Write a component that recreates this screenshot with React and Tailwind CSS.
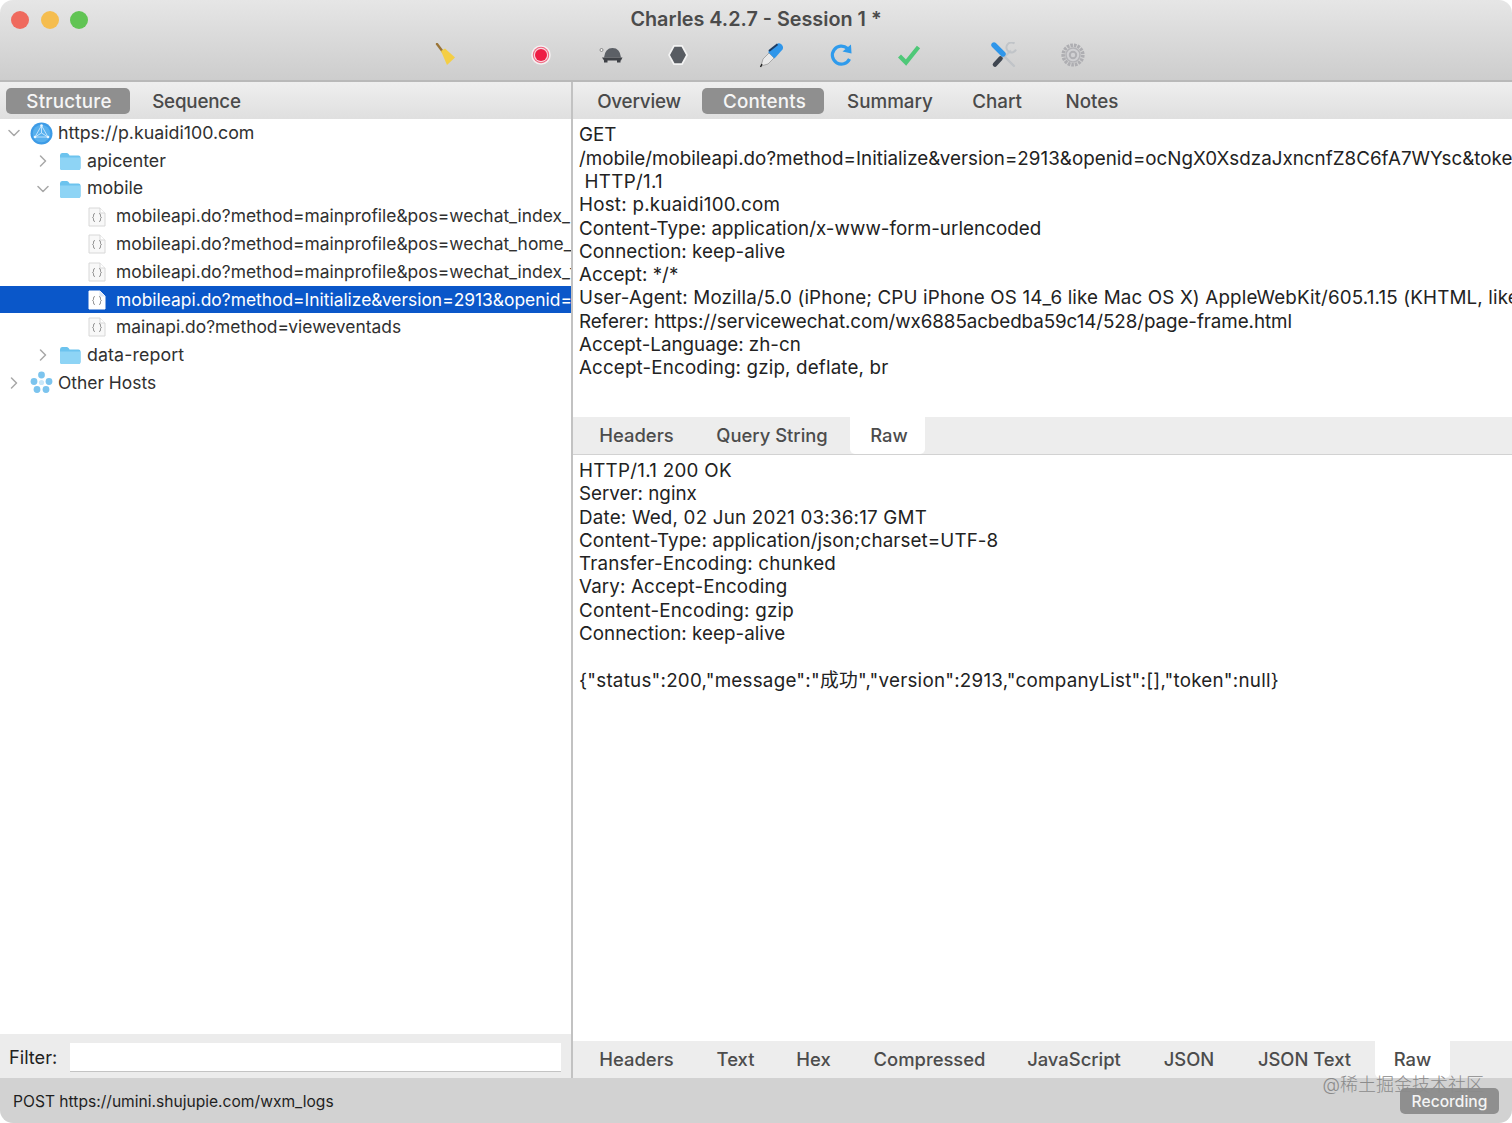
import React from "react";

const Chevron = ({ open }) => (
  <svg width="12" height="12" viewBox="0 0 12 12" fill="none" stroke="#a8a8a8" strokeWidth="1.5" strokeLinecap="round" strokeLinejoin="round">
    {open ? <path d="M1 3.5 L6 8.5 L11 3.5" /> : <path d="M3.5 1 L8.5 6 L3.5 11" />}
  </svg>
);

const Folder = () => (
  <svg width="22" height="20" viewBox="0 0 22 20">
    <path d="M1 4.5 Q1 2 3 2 H8 Q9 2 10 3.5 L10.5 4.5 H19.5 Q21.5 4.5 21.5 6.5 V17 Q21.5 19 19.5 19 H3 Q1 19 1 17 Z" fill="#6cc3ee" />
    <path d="M1 6.5 H21.5 V17 Q21.5 19 19.5 19 H3 Q1 19 1 17 Z" fill="#8ed4f5" />
  </svg>
);

const FileIcon = ({ selected }) => (
  <svg width="18" height="20" viewBox="0 0 18 20" fill="none">
    <path d="M1 1 H12 L17 6 V19 H1 Z" fill={selected ? "#ffffff" : "#f8f8f8"} stroke={selected ? "#ffffff" : "#d8d8d8"} />
    <path d="M12 1 V6 H17" fill={selected ? "#dbe6f5" : "#ffffff"} stroke={selected ? "#dbe6f5" : "#d8d8d8"} />
    <path d="M7 6.5 Q5.5 6.5 5.5 8 V9.2 Q5.5 10.3 4.5 10.5 Q5.5 10.7 5.5 11.8 V13 Q5.5 14.5 7 14.5 M11 6.5 Q12.5 6.5 12.5 8 V9.2 Q12.5 10.3 13.5 10.5 Q12.5 10.7 12.5 11.8 V13 Q12.5 14.5 11 14.5" stroke="#8a8a8a" strokeWidth="0.9" />
  </svg>
);

const Globe = () => (
  <svg width="23" height="23" viewBox="0 0 23 23">
    <circle cx="11.5" cy="11.5" r="11" fill="#3d9be6" />
    <circle cx="11.5" cy="11.5" r="8.8" fill="#57b0ee" />
    <path d="M11.5 3.5 L5 15 H18 Z M11.5 3.5 L11.5 11 M5 15 L11.5 11 L18 15" fill="none" stroke="#d9efff" strokeWidth="0.8" />
    <circle cx="11.5" cy="3.5" r="1.3" fill="#e8f6ff" />
    <circle cx="5" cy="15" r="1.3" fill="#e8f6ff" />
    <circle cx="18" cy="15" r="1.3" fill="#e8f6ff" />
  </svg>
);

const Hosts = () => (
  <svg width="23" height="23" viewBox="0 0 23 23" fill="#7cc4ee">
    <circle cx="11.5" cy="4" r="3.4" />
    <circle cx="4" cy="10.5" r="3.4" />
    <circle cx="19" cy="10.5" r="3.4" />
    <circle cx="7" cy="18.5" r="3.4" />
    <circle cx="16" cy="18.5" r="3.4" />
    <circle cx="11.5" cy="11.5" r="2.6" fill="#c8e6f8" />
  </svg>
);

const Broom = () => (
  <svg width="24" height="24" viewBox="0 0 24 24">
    <path d="M3 1 L9 9" stroke="#9a7436" strokeWidth="2.4" strokeLinecap="round" />
    <path d="M7 8 L11 5.5 L21 14.5 L13 22 Z" fill="#f4ce45" />
  </svg>
);
const Record = () => (
  <svg width="20" height="20" viewBox="0 0 20 20">
    <circle cx="10" cy="10" r="9.8" fill="#f4f0f1" />
    <circle cx="10" cy="10" r="8.2" fill="#f0657f" />
    <circle cx="10" cy="10" r="7.2" fill="#f6d8de" />
    <circle cx="10" cy="10" r="6" fill="#ee1c44" />
  </svg>
);
const Turtle = () => (
  <svg width="24" height="20" viewBox="0 0 24 20">
    <circle cx="2.5" cy="5" r="1.5" fill="#f3f3f3" stroke="#555" strokeWidth="0.6" />
    <path d="M5 12.5 Q6 3 13.5 3 Q21 3 22 12.5 Z" fill="#5c6066" />
    <path d="M3 12.5 H23.5 L22 15.5 H5 Z" fill="#3e4146" />
    <rect x="5" y="15" width="3.5" height="2.5" fill="#3e4146" />
    <rect x="18" y="15" width="3.5" height="2.5" fill="#3e4146" />
  </svg>
);
const Stop = () => (
  <svg width="20" height="22" viewBox="0 0 20 22">
    <path d="M5.5 1 H14.5 L20 11 L14.5 21 H5.5 L0 11 Z" fill="#f3f3f3" />
    <path d="M6.5 2.8 H13.5 L18 11 L13.5 19.2 H6.5 L2 11 Z" fill="#585c62" />
  </svg>
);
const Pen = () => (
  <svg width="26" height="26" viewBox="0 0 26 26">
    <path d="M2 24 L4 17 L10 11 L15 16 L9 22 Z" fill="#e9e9e9" stroke="#9a9a9a" strokeWidth="0.8" />
    <path d="M1.5 25 L3 22" stroke="#222" strokeWidth="1.4" />
    <path d="M9 10 L18 2 Q20 0.5 22.5 2.5 Q25 5 23.5 7.5 L15.5 16.5 Z" fill="#2f96ea" />
    <path d="M10 9 L18.5 2.2" stroke="#1c3d66" strokeWidth="2" />
  </svg>
);
const Refresh = () => (
  <svg width="24" height="24" viewBox="0 0 24 24" fill="none">
    <path d="M18.5 5.5 A9 9 0 1 0 20.5 16" stroke="#2f9bec" strokeWidth="3.2" />
    <path d="M13.5 8.5 L22.5 10.5 L22 1.5 Z" fill="#2f9bec" />
  </svg>
);
const Check = () => (
  <svg width="24" height="22" viewBox="0 0 24 22" fill="none">
    <path d="M2.5 12 L9 18.5 L21.5 3" stroke="#4fc878" strokeWidth="4.2" />
  </svg>
);
const Tools = () => (
  <svg width="26" height="26" viewBox="0 0 26 26" fill="none">
    <path d="M8 20 L20 8.5" stroke="#c4c8cc" strokeWidth="2.2" />
    <path d="M23.5 1.5 A5 5 0 1 0 25 7.5" stroke="#c0c4c8" strokeWidth="2" />
    <path d="M11 12 L23 24" stroke="#c0c4c8" strokeWidth="2.4" strokeLinecap="round" />
    <path d="M9.5 16.5 L4 22.5" stroke="#3f4650" strokeWidth="4.6" strokeLinecap="round" />
    <path d="M3 3 L12 12" stroke="#2f96ea" strokeWidth="5.4" strokeLinecap="round" />
  </svg>
);
const Gear = () => (
  <svg width="24" height="24" viewBox="0 0 24 24" fill="none">
    <circle cx="12" cy="12" r="9.8" stroke="#aeaeb2" strokeWidth="3.6" strokeDasharray="2.6 1" />
    <circle cx="12" cy="12" r="7" fill="#d0d0d3" stroke="#b4b4b8" strokeWidth="1.6" />
    <circle cx="12" cy="12" r="3.2" stroke="#b0b0b4" strokeWidth="2" />
  </svg>
);

const treeRows = [
  { pad: "pl-[8px]", chev: "open", icon: <Globe />, label: "https://p.kuaidi100.com", size: "text-[17.8px]" },
  { pad: "pl-[37px]", chev: "closed", icon: <Folder />, label: "apicenter", size: "text-[17.8px]" },
  { pad: "pl-[37px]", chev: "open", icon: <Folder />, label: "mobile", size: "text-[17.8px]" },
  { pad: "pl-[66px]", icon: <FileIcon />, label: "mobileapi.do?method=mainprofile&pos=wechat_index_list&version=2913" },
  { pad: "pl-[66px]", icon: <FileIcon />, label: "mobileapi.do?method=mainprofile&pos=wechat_home_list&version=2913" },
  { pad: "pl-[66px]", icon: <FileIcon />, label: "mobileapi.do?method=mainprofile&pos=wechat_index_top&version=2913" },
  { pad: "pl-[66px]", icon: <FileIcon selected />, label: "mobileapi.do?method=Initialize&version=2913&openid=ocNgX0XsdzaJxncnfZ8C6fA7WYsc", selected: true },
  { pad: "pl-[66px]", icon: <FileIcon />, label: "mainapi.do?method=vieweventads" },
  { pad: "pl-[37px]", chev: "closed", icon: <Folder />, label: "data-report", size: "text-[17.8px] tracking-[0.1px]" },
  { pad: "pl-[8px]", chev: "closed", icon: <Hosts />, label: "Other Hosts" },
];

const Pill = ({ children, active, className = "" }) => (
  <div className={`h-[26px] pt-[3px] flex items-center justify-center rounded-[5px] text-[18.8px] font-medium ${active ? "bg-[#8f8f8f] text-[#f6f6f6] tracking-[0.2px]" : "text-[#4a4a4a]"} ${className}`}>
    {children}
  </div>
);

const SubTab = ({ children, active, className = "" }) => (
  <div className={`h-full flex items-center justify-center text-[18.4px] font-medium text-[#4c4c4c] ${active ? "bg-white rounded-b-[5px]" : ""} ${className}`}>
    {children}
  </div>
);

const requestLines = [
  ["GET", ""],
  ["/mobile/mobileapi.do?method=Initialize&version=2913&openid=ocNgX0XsdzaJxncnfZ8C6fA7WYsc&token=&platform=WWW&appid=wx6885acbedba59c14", "tracking-[0.02px]"],
  [" HTTP/1.1", "tracking-[0.3px]"],
  ["Host: p.kuaidi100.com", "tracking-[0.24px]"],
  ["Content-Type: application/x-www-form-urlencoded", "tracking-[0.05px]"],
  ["Connection: keep-alive", "tracking-[0.04px]"],
  ["Accept: */*", ""],
  ["User-Agent: Mozilla/5.0 (iPhone; CPU iPhone OS 14_6 like Mac OS X) AppleWebKit/605.1.15 (KHTML, like Gecko) Mobile/15E148 MicroMessenger", "tracking-[0.15px]"],
  ["Referer: https://servicewechat.com/wx6885acbedba59c14/528/page-frame.html", "tracking-[-0.07px]"],
  ["Accept-Language: zh-cn", ""],
  ["Accept-Encoding: gzip, deflate, br", "tracking-[0.15px]"],
];

const responseLines = [
  ["HTTP/1.1 200 OK", "tracking-[0.27px]"],
  ["Server: nginx", ""],
  ["Date: Wed, 02 Jun 2021 03:36:17 GMT", "tracking-[0.2px]"],
  ["Content-Type: application/json;charset=UTF-8", "tracking-[0.11px]"],
  ["Transfer-Encoding: chunked", "tracking-[0.19px]"],
  ["Vary: Accept-Encoding", "tracking-[0.14px]"],
  ["Content-Encoding: gzip", "tracking-[0.22px]"],
  ["Connection: keep-alive", "tracking-[0.04px]"],
  [" ", ""],
  ['{"status":200,"message":"成功","version":2913,"companyList":[],"token":null}', "tracking-[0.24px]"],
];

export default function App() {
  return (
    <div className="w-[1512px] h-[1123px] overflow-hidden bg-white text-[#262626] font-['Inter','Noto_Sans_CJK_SC',sans-serif] text-[19.5px]">
      <div className="w-full h-full flex flex-col rounded-[13px] overflow-hidden">
        {/* title bar */}
        <div className="h-[82px] shrink-0 flex flex-col bg-gradient-to-b from-[#e6e6e6] to-[#cdcdcd] border-b-2 border-[#b9b9b9]">
          <div className="h-[38px] flex items-center relative">
            <div className="absolute left-[11px] top-[11px] flex gap-[11.5px]">
              <div className="w-[18px] h-[18px] rounded-full bg-[#ef6a5e]" />
              <div className="w-[18px] h-[18px] rounded-full bg-[#f5bd4f]" />
              <div className="w-[18px] h-[18px] rounded-full bg-[#61c454]" />
            </div>
            <div className="w-full text-center pt-[1px] font-semibold text-[19.8px] text-[#4b4b4b]">Charles 4.2.7 - Session 1 *</div>
          </div>
          <div className="flex items-center h-[34px] pl-[434px]">
            <div className="w-[24px] flex justify-center"><Broom /></div>
            <div className="w-[20px] flex justify-center ml-[73px]"><Record /></div>
            <div className="w-[24px] flex justify-center ml-[48px]"><Turtle /></div>
            <div className="w-[20px] flex justify-center ml-[45px]"><Stop /></div>
            <div className="w-[26px] flex justify-center ml-[71px]"><Pen /></div>
            <div className="w-[24px] flex justify-center ml-[44px]"><Refresh /></div>
            <div className="w-[24px] flex justify-center ml-[44px]"><Check /></div>
            <div className="w-[26px] flex justify-center ml-[70px]"><Tools /></div>
            <div className="w-[24px] flex justify-center ml-[44px]"><Gear /></div>
          </div>
        </div>

        {/* panels */}
        <div className="flex-1 min-h-0 flex">
          {/* left */}
          <div className="w-[571px] shrink-0 flex flex-col">
            <div className="h-[37px] shrink-0 flex items-center pl-[6px] gap-[11px] bg-gradient-to-b from-[#efefef] to-[#dfdfdf]">
              <Pill active className="w-[124px] pl-[2px]">Structure</Pill>
              <Pill className="w-[111px] tracking-[-0.2px]">Sequence</Pill>
            </div>
            <div className="flex-1 min-h-0 bg-white pt-[0.6px] overflow-hidden">
              {treeRows.map((r, i) => (
                <div key={i} className={`h-[27.7px] flex items-center whitespace-nowrap overflow-hidden ${r.pad} ${r.selected ? "bg-[#0a57c9] text-white" : "text-[#303030]"}`}>
                  {r.chev && (
                    <div className="w-[12px] shrink-0 mr-[9px] flex justify-center">
                      <Chevron open={r.chev === "open"} />
                    </div>
                  )}
                  {!r.chev && <div className="w-[21px] shrink-0" />}
                  <div className="w-[29px] shrink-0 pl-[1px] flex">{r.icon}</div>
                  <span className={`min-w-0 overflow-hidden ${r.size || "text-[17.4px]"}`}>{r.label}</span>
                </div>
              ))}
            </div>
            <div className="h-[44px] shrink-0 flex items-center bg-[#ececec] pt-[2px] pl-[9px] pr-[10px] gap-[11px]">
              <span className="w-[50px] pt-[1px] text-[18.2px] text-[#222]">Filter:</span>
              <div className="flex-1 h-[29px] bg-white border-b border-[#c4c4c4]" />
            </div>
          </div>
          <div className="w-[2px] shrink-0 bg-[#c2c2c2]" />
          {/* right */}
          <div className="flex-1 min-w-0 flex flex-col">
            <div className="h-[37px] shrink-0 flex items-center pl-[6px] bg-gradient-to-b from-[#efefef] to-[#dfdfdf]">
              <Pill className="w-[120px] mr-[3px] tracking-[-0.2px]">Overview</Pill>
              <Pill active className="w-[122px] pl-[3px]">Contents</Pill>
              <Pill className="w-[132px]">Summary</Pill>
              <Pill className="w-[82px]">Chart</Pill>
              <Pill className="w-[108px]">Notes</Pill>
            </div>
            <div className="h-[298px] shrink-0 bg-white pl-[6px] pt-[4.4px] overflow-hidden text-[#222]">
              {requestLines.map(([l, c], i) => (
                <div key={i} className={`h-[23.3px] leading-[23.3px] whitespace-pre overflow-hidden text-[18.8px] ${c}`}>{l}</div>
              ))}
            </div>
            <div className="h-[38px] shrink-0 flex bg-[#ededed] border-b border-[#d2d2d2] pl-[1px]">
              <SubTab className="w-[125px]">Headers</SubTab>
              <SubTab className="w-[146px]">Query String</SubTab>
              <SubTab active className="w-[75px] ml-[5px] pl-[3px]">Raw</SubTab>
            </div>
            <div className="flex-1 min-h-0 bg-white pl-[6px] pt-[4px] overflow-hidden text-[#222]">
              {responseLines.map(([l, c], i) => (
                <div key={i} className={`h-[23.3px] leading-[23.3px] whitespace-pre overflow-hidden text-[18.8px] ${c}`}>{l}</div>
              ))}
            </div>
            <div className="h-[37px] shrink-0 flex bg-[#ededed] pl-[1px]">
              <SubTab className="w-[125px]">Headers</SubTab>
              <SubTab className="w-[73px]">Text</SubTab>
              <SubTab className="w-[83px]">Hex</SubTab>
              <SubTab className="w-[149px]">Compressed</SubTab>
              <SubTab className="w-[140px]">JavaScript</SubTab>
              <SubTab className="w-[90px]">JSON</SubTab>
              <SubTab className="w-[141px]">JSON Text</SubTab>
              <SubTab active className="w-[75px]">Raw</SubTab>
            </div>
          </div>
        </div>

        {/* status bar */}
        <div className="h-[45px] shrink-0 relative flex items-center pl-[13px] pt-[2px] bg-[#d2d2d2] text-[15.6px] text-[#1f1f1f]">
          POST https://umini.shujupie.com/wxm_logs
          <div className="absolute right-[13px] bottom-[9px] h-[26px] w-[99px] pt-[1px] rounded-[5px] bg-[#8f8f8f] text-[#f4f4f4] flex items-center justify-center text-[15.6px] font-medium">Recording</div>
          <div className="absolute right-[28px] top-[-7px] text-[#8b8b8b] text-[18px] whitespace-nowrap font-light">@稀土掘金技术社区</div>
        </div>
      </div>
    </div>
  );
}
